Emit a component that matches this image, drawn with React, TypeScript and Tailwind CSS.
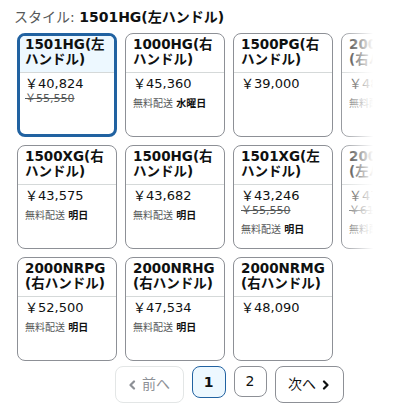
import React from 'react';

type Item = {
    title: string;
    price: string;
    was?: string;
    delivery?: string;
};

const items: Item[] = [
    { title: '1501HG(左ハンドル)', price: '￥40,824', was: '￥55,550' },
    { title: '1000HG(右ハンドル)', price: '￥45,360', delivery: '水曜日' },
    { title: '1500PG(右ハンドル)', price: '￥39,000' },
    { title: '2000NRXG(右ハンドル)', price: '￥48,510', delivery: '明日' },
    { title: '1500XG(右ハンドル)', price: '￥43,575', delivery: '明日' },
    { title: '1500HG(右ハンドル)', price: '￥43,682', delivery: '明日' },
    { title: '1501XG(左ハンドル)', price: '￥43,246', was: '￥55,550', delivery: '明日' },
    { title: '2001NRXG(左ハンドル)', price: '￥47,520', was: '￥61,050', delivery: '明日' },
    { title: '2000NRPG(右ハンドル)', price: '￥52,500', delivery: '明日' },
    { title: '2000NRHG(右ハンドル)', price: '￥47,534', delivery: '明日' },
    { title: '2000NRMG(右ハンドル)', price: '￥48,090' },
];

const font = "font-['DejaVu_Sans','Noto_Sans_CJK_JP',sans-serif]";

const Card: React.FC<{ item: Item; selected: boolean }> = ({ item, selected }) => {
    return (
        <div
            className={
                selected
                    ? 'h-[104px] rounded-[8px] border-[3px] border-[#2162a1] overflow-hidden bg-white'
                    : 'h-[104px] rounded-[8px] border border-[#8d9096] overflow-hidden bg-white'
            }
        >
            <div
                className={
                    selected
                        ? 'h-[37px] border-b border-[#d5d9d9] bg-[#edf8ff] px-[5px] pt-[1px]'
                        : 'h-[39px] border-b border-[#d5d9d9] px-[7px] pt-[3px]'
                }
            >
                <div className="text-[13.5px] leading-[15px] font-bold text-[#0f1111] break-all">
                    {item.title}
                </div>
            </div>
            <div className={selected ? 'px-[5px] pt-[2px]' : 'px-[7px] pt-[2px]'}>
                <div className="text-[13px] leading-[17px] text-[#0f1111]">{item.price}</div>
                {item.was && (
                    <div className="text-[11px] leading-[14px] text-[#565959] line-through">{item.was}</div>
                )}
                {item.delivery && (
                    <div className="mt-[5px] text-[10px] leading-[14px] text-[#565959]">
                        無料配送 <span className="font-bold text-[#0f1111]">{item.delivery}</span>
                    </div>
                )}
            </div>
        </div>
    );
};

const Chevron: React.FC<{ dir: 'left' | 'right'; color: string }> = ({ dir, color }) => (
    <svg width="8" height="10" viewBox="0 0 8 10" className="shrink-0">
        <path
            d={dir === 'left' ? 'M6 1.5 L2.5 5 L6 8.5' : 'M2 1.5 L5.5 5 L2 8.5'}
            fill="none"
            stroke={color}
            strokeWidth="2.2"
            strokeLinecap="round"
            strokeLinejoin="round"
        />
    </svg>
);

export default function App() {
    return (
        <div className={`relative w-[413px] h-[410px] overflow-hidden bg-white ${font}`}>
            <div className="pt-[8px] pl-[14px] text-[14px] leading-[18px] text-[#565959]">
                スタイル: <span className="font-bold text-[#0f1111]">1501HG(左ハンドル)</span>
            </div>
            <div className="ml-[17px] w-[424px] mt-[7px]">
                <div className="grid grid-cols-[repeat(4,100px)] gap-[8px]">
                    {items.map((item, i) => (
                        <Card key={i} item={item} selected={i === 0} />
                    ))}
                </div>
                <div className="mt-[5px] flex items-start justify-center gap-[8px]">
                    <button className="h-[37px] w-[69px] rounded-[8px] border border-[#e3e6e6] flex items-center justify-center gap-[6px] text-[14px] text-[#8d9096]">
                        <Chevron dir="left" color="#8d9096" />
                        前へ
                    </button>
                    <button className="h-[32px] w-[34px] rounded-[8px] border border-[#2162a1] bg-[#edf8ff] flex items-center justify-center text-[14px] font-bold text-[#0f1111]">
                        1
                    </button>
                    <button className="h-[31px] w-[33px] rounded-[8px] border border-[#8d9096] flex items-center justify-center text-[14px] text-[#0f1111]">
                        2
                    </button>
                    <button className="h-[37px] w-[69px] rounded-[8px] border border-[#8d9096] flex items-center justify-center gap-[6px] text-[14px] text-[#0f1111]">
                        次へ
                        <Chevron dir="right" color="#0f1111" />
                    </button>
                </div>
            </div>
            <div className="pointer-events-none absolute top-[28px] bottom-[50px] right-0 w-[75px] bg-gradient-to-r from-white/0 via-white via-[47%] to-white" />
        </div>
    );
}
